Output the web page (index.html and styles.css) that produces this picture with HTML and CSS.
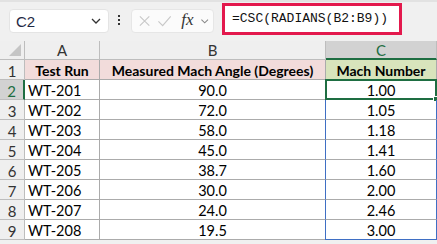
FILE: index.html
```html
<!DOCTYPE html>
<html>
<head>
<meta charset="utf-8">
<link rel="stylesheet" href="styles.css">
</head>
<body>
<div class="toolbar">
  <div class="namebox">
    <span class="ref">C2</span>
    <svg class="chev" width="12" height="8" viewBox="0 0 12 8"><path d="M2 2 L6 6 L10 2" fill="none" stroke="#333" stroke-width="1.3"/></svg>
  </div>
  <div class="dots"><i></i><i></i><i></i></div>
  <div class="fxbox">
    <svg width="14" height="14" viewBox="0 0 14 14"><path d="M2 2 L12 12 M12 2 L2 12" stroke="#c8c8c8" stroke-width="1.2"/></svg>
    <svg width="16" height="14" viewBox="0 0 16 14"><path d="M1.5 7.5 L6 12 L14.5 2" fill="none" stroke="#c8c8c8" stroke-width="1.2"/></svg>
    <span class="fx">fx</span>
    <svg width="10" height="8" viewBox="0 0 10 8"><path d="M1.5 2.5 L5 6 L8.5 2.5" fill="none" stroke="#888" stroke-width="1.1"/></svg>
  </div>
  <div class="formula">=CSC(RADIANS(B2:B9))</div>
</div>
<div class="sheet">
  <div class="corner"><span class="tri"></span></div>
  <div class="colh">A</div>
  <div class="colh">B</div>
  <div class="colh sel">C</div>

  <div class="rowh">1</div>
  <div class="cell hd pink">Test Run</div>
  <div class="cell hd pink">Measured Mach Angle (Degrees)</div>
  <div class="cell hd green">Mach Number</div>

  <div class="rowh sel">2</div>
  <div class="cell">WT-201</div>
  <div class="cell c">90.0</div>
  <div class="cell c rng">1.00<span class="active"><span class="handle"></span></span></div>

  <div class="rowh">3</div>
  <div class="cell">WT-202</div>
  <div class="cell c">72.0</div>
  <div class="cell c rng">1.05</div>

  <div class="rowh">4</div>
  <div class="cell">WT-203</div>
  <div class="cell c">58.0</div>
  <div class="cell c rng">1.18</div>

  <div class="rowh">5</div>
  <div class="cell">WT-204</div>
  <div class="cell c">45.0</div>
  <div class="cell c rng">1.41</div>

  <div class="rowh">6</div>
  <div class="cell">WT-205</div>
  <div class="cell c">38.7</div>
  <div class="cell c rng">1.60</div>

  <div class="rowh">7</div>
  <div class="cell">WT-206</div>
  <div class="cell c">30.0</div>
  <div class="cell c rng">2.00</div>

  <div class="rowh">8</div>
  <div class="cell">WT-207</div>
  <div class="cell c">24.0</div>
  <div class="cell c rng">2.46</div>

  <div class="rowh">9</div>
  <div class="cell">WT-208</div>
  <div class="cell c">19.5</div>
  <div class="cell c rng last">3.00</div>
</div>
</body>
</html>
```
FILE: styles.css
```css
* { box-sizing: border-box; }
html, body { margin: 0; padding: 0; }
body {
  width: 437px;
  height: 244px;
  overflow: hidden;
  background: #f0f0f0;
  font-family: Lato, "Liberation Sans", Arial, sans-serif;
}
.toolbar {
  height: 41px;
  display: flex;
  align-items: flex-start;
  padding: 3px 0 0 9px;
  border-top: 2px solid #e2e2e2;
}
.namebox {
  margin-top: 4px;
  width: 100px;
  height: 24px;
  background: #fff;
  border: 1px solid #e4e4e4;
  border-radius: 4px;
  display: flex;
  align-items: center;
  justify-content: space-between;
  padding: 0 6px 0 6px;
  font-family: "Liberation Sans", Arial, sans-serif;
  font-size: 15px;
  color: #1f2a44;
}
.dots {
  margin: 10px 0 0 9px;
  width: 3px;
  display: flex;
  flex-direction: column;
  gap: 2px;
}
.dots i { display: block; width: 2px; height: 2px; background: #333; }
.fxbox {
  margin: 4px 0 0 10px;
  width: 83px;
  height: 24px;
  background: #fbfbfb;
  border: 1px solid #e6e6e6;
  border-radius: 4px;
  display: flex;
  align-items: center;
  gap: 6px;
  padding: 0 4px 0 6px;
}
.fx {
  font-family: "Liberation Serif", serif;
  font-style: italic;
  font-size: 17px;
  color: #333;
  margin-left: 3px;
  margin-top: -2px;
}
.formula {
  margin-left: 8px;
  margin-top: -2px;
  width: 180px;
  height: 32px;
  background: #fff;
  border: 3px solid #e3194d;
  font-family: "Liberation Mono", monospace;
  font-size: 13px;
  color: #111;
  padding: 5px 0 0 7px;
}
.sheet {
  display: grid;
  grid-template-columns: 25px 75px 226px 111px;
  grid-template-rows: 19px repeat(9, 20px);
  background: #fff;
}
.corner, .colh, .rowh {
  background: #efefef;
  color: #333;
  font-size: 15px;
  display: flex;
  align-items: center;
  justify-content: center;
  border-right: 1px solid #bdbdbd;
  border-bottom: 1px solid #bdbdbd;
}
.rowh { padding-top: 2px; }
.corner { position: relative; }
.tri {
  position: absolute;
  right: 3px;
  bottom: 3px;
  width: 0; height: 0;
  border-left: 12px solid transparent;
  border-bottom: 12px solid #c5c5c5;
}
.colh.sel {
  background: #d2d2d2;
  color: #1e6e42;
  border-bottom: 2px solid #1e6e42;
}
.rowh.sel {
  background: #d2d2d2;
  color: #1e6e42;
  border-right: 2px solid #1e6e42;
}
.cell {
  font-size: 14.5px;
  color: #000;
  border-right: 1px solid #ababab;
  border-bottom: 1px solid #ababab;
  padding: 2px 0 0 3px;
  white-space: nowrap;
  overflow: hidden;
}
.cell.c { text-align: center; padding-left: 0; }
.hd { font-weight: bold; font-size: 14px; text-align: center; padding-left: 0; }
.pink { background: #f2dcdb; }
.green { background: #d8e4bc; }
.rng { border-left: 1px solid #3f6fc4; border-right: 1px solid #3f6fc4; margin-left: -1px; position: relative; overflow: visible; }
.rng.last { border-bottom: 1px solid #3f6fc4; }
.active {
  position: absolute;
  left: -1px; top: -1px; right: -1px; bottom: -1px;
  border: 2px solid #1e6e42;
}
.handle {
  position: absolute;
  right: -4px; bottom: -4px;
  width: 6px; height: 6px;
  background: #1e6e42;
  border: 1px solid #fff;
}
```
